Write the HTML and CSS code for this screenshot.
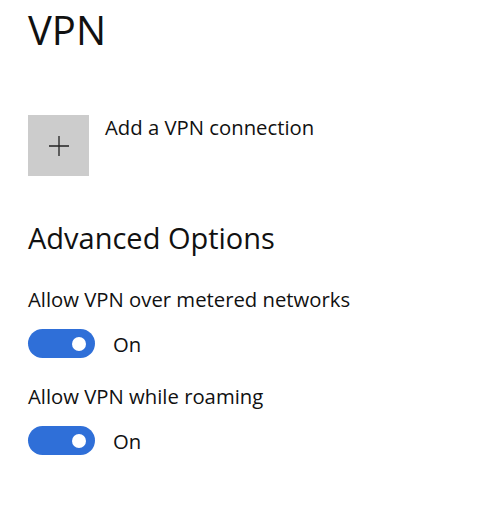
FILE: index.html
```html
<!DOCTYPE html>
<html>
<head>
<meta charset="utf-8">
<link rel="stylesheet" href="styles.css">
</head>
<body>
<main class="page">
  <h1 class="title">VPN</h1>
  <div class="add-row">
    <div class="add-box">
      <svg width="22" height="22" viewBox="0 0 22 22"><path d="M11 1v20M1 11h20" stroke="#222" stroke-width="1.3" fill="none"/></svg>
    </div>
    <span class="add-label">Add a VPN connection</span>
  </div>
  <h2 class="section">Advanced Options</h2>
  <div class="option first">
    <div class="option-label">Allow VPN over metered networks</div>
    <div class="toggle-row">
      <span class="toggle"><span class="knob"></span></span>
      <span class="state">On</span>
    </div>
  </div>
  <div class="option">
    <div class="option-label">Allow VPN while roaming</div>
    <div class="toggle-row">
      <span class="toggle"><span class="knob"></span></span>
      <span class="state">On</span>
    </div>
  </div>
</main>
</body>
</html>
```
FILE: styles.css
```css
html, body { margin: 0; padding: 0; background: #fff; }
body { font-family: "Open Sans", "Noto Sans", sans-serif; color: #111; }
.page { padding: 0 28px; display: flex; flex-direction: column; }
.title { margin: 0; padding-top: 6px; font-size: 40px; font-weight: 400; line-height: 48px; }
.add-row { display: flex; align-items: flex-start; margin-top: 61px; gap: 16px; }
.add-box { width: 61px; height: 61px; background: #cccccc; display: flex; align-items: center; justify-content: center; }
.add-label { font-size: 20.3px; line-height: 26px; margin-top: -1px; }
.section { margin: 44px 0 0; font-size: 29px; font-weight: 400; line-height: 36px; }
.option { display: flex; flex-direction: column; margin-top: 25px; }
.option.first { margin-top: 30px; }
.option-label { font-size: 20.3px; line-height: 26px; }
.toggle-row { display: flex; align-items: center; gap: 18px; margin-top: 17px; }
.toggle { width: 67px; height: 29px; border-radius: 15px; background: #2f6fd8; display: flex; align-items: center; justify-content: flex-end; padding-right: 9px; box-sizing: border-box; }
.knob { width: 14px; height: 14px; border-radius: 50%; background: #fff; }
.state { font-size: 20.3px; line-height: 26px; }
```
